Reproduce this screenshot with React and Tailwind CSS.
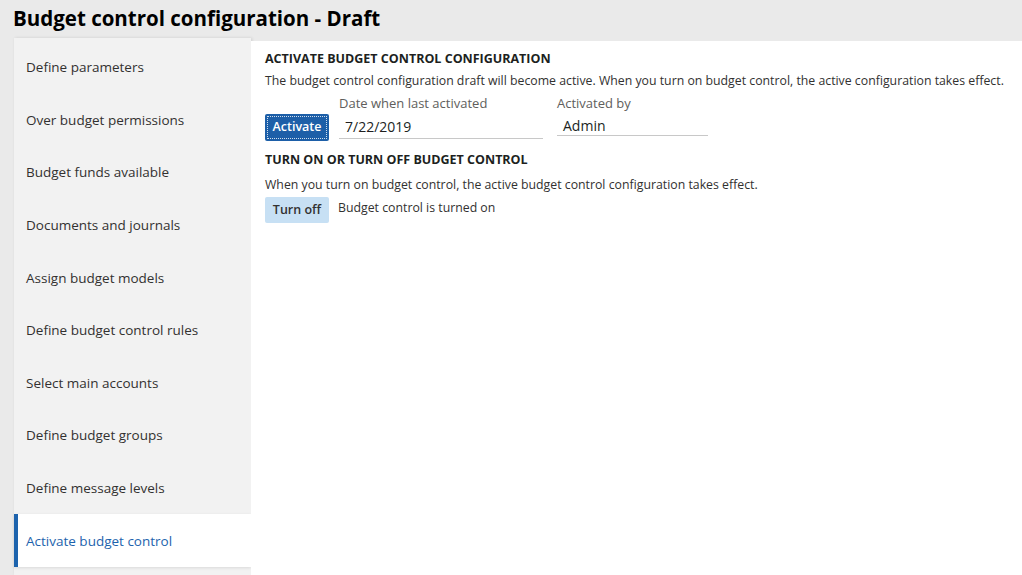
const navItems = [
  'Define parameters',
  'Over budget permissions',
  'Budget funds available',
  'Documents and journals',
  'Assign budget models',
  'Define budget control rules',
  'Select main accounts',
  'Define budget groups',
  'Define message levels',
  'Activate budget control',
];

function Field({ label, value, width, inputHeight }) {
  return (
    <div className={`flex flex-col ${width}`}>
      <span className="text-[13px] leading-[18px] text-[#605e5c]">{label}</span>
      <div
        className={`mt-[3px] border-b border-[#c8c8c8] px-[6px] text-[14px] text-[#201f1e] ${inputHeight}`}
      >
        {value}
      </div>
    </div>
  );
}

export default function App() {
  const active = 'Activate budget control';
  return (
    <div
      className="flex h-[575px] w-[1022px] flex-col overflow-hidden bg-[#eaeaea]"
      style={{ fontFamily: '"Open Sans", "Noto Sans", sans-serif' }}
    >
      <h1 className="h-[38px] pl-[13px] pt-[4px] text-[20.5px] font-bold leading-[28px] text-black">
        Budget control configuration - Draft
      </h1>
      <div className="flex min-h-0 flex-1 pl-[14px]">
        <nav className="flex w-[237px] shrink-0 flex-col bg-[#f2f2f2] pt-[3px] shadow-[1px_0_3px_rgba(0,0,0,0.12)]">
          {navItems.map((item) => {
            const selected = item === active;
            return (
              <div
                key={item}
                className={`flex h-[52.6px] shrink-0 items-center text-[13.5px] ${
                  selected
                    ? 'border-l-[4px] border-[#1d63ad] bg-white pl-[8px] text-[#1d63ad] shadow-[0_1px_3px_rgba(0,0,0,0.1)]'
                    : 'pl-[12px] text-[#323130]'
                }`}
              >
                {item}
              </div>
            );
          })}
        </nav>
        <main className="mt-[3px] flex-1 bg-white pl-[14px] pt-[9px] text-[#201f1e]">
          <h2 className="text-[12.5px] font-bold leading-[18px] text-[#201f1e]">ACTIVATE BUDGET CONTROL CONFIGURATION</h2>
          <p className="mt-[4px] text-[12.3px] leading-[18px] text-[#323130]">
            The budget control configuration draft will become active. When you turn on budget control, the active configuration takes effect.
          </p>
          <div className="mt-[4px] flex items-start gap-[10px]">
            <button
              type="button"
              className="mt-[20px] h-[27px] w-[64px] rounded-[2px] bg-[#1d5fa8] p-[2px] text-[12.5px] font-semibold text-white"
            >
              <span className="flex h-full w-full items-center justify-center border border-dotted border-white/80">Activate</span>
            </button>
            <Field
              label="Date when last activated"
              value="7/22/2019"
              width="w-[204px]"
              inputHeight="h-[24px] leading-[24px]"
            />
            <div className="ml-[4px]">
              <Field
                label="Activated by"
                value="Admin"
                width="w-[151px]"
                inputHeight="h-[21px] leading-[21px]"
              />
            </div>
          </div>
          <h2 className="mt-[10px] text-[12.5px] font-bold leading-[18px] text-[#201f1e]">TURN ON OR TURN OFF BUDGET CONTROL</h2>
          <p className="mt-[7px] text-[12.3px] leading-[18px] text-[#323130]">
            When you turn on budget control, the active budget control configuration takes effect.
          </p>
          <div className="mt-[3px] flex items-start gap-[9px]">
            <button
              type="button"
              className="h-[26px] w-[64px] rounded-[2px] bg-[#c7e0f4] text-[12.5px] font-semibold text-[#323130]"
            >
              Turn off
            </button>
            <span className="pt-[2px] text-[12.3px] leading-[18px] text-[#323130]">Budget control is turned on</span>
          </div>
        </main>
      </div>
    </div>
  );
}
